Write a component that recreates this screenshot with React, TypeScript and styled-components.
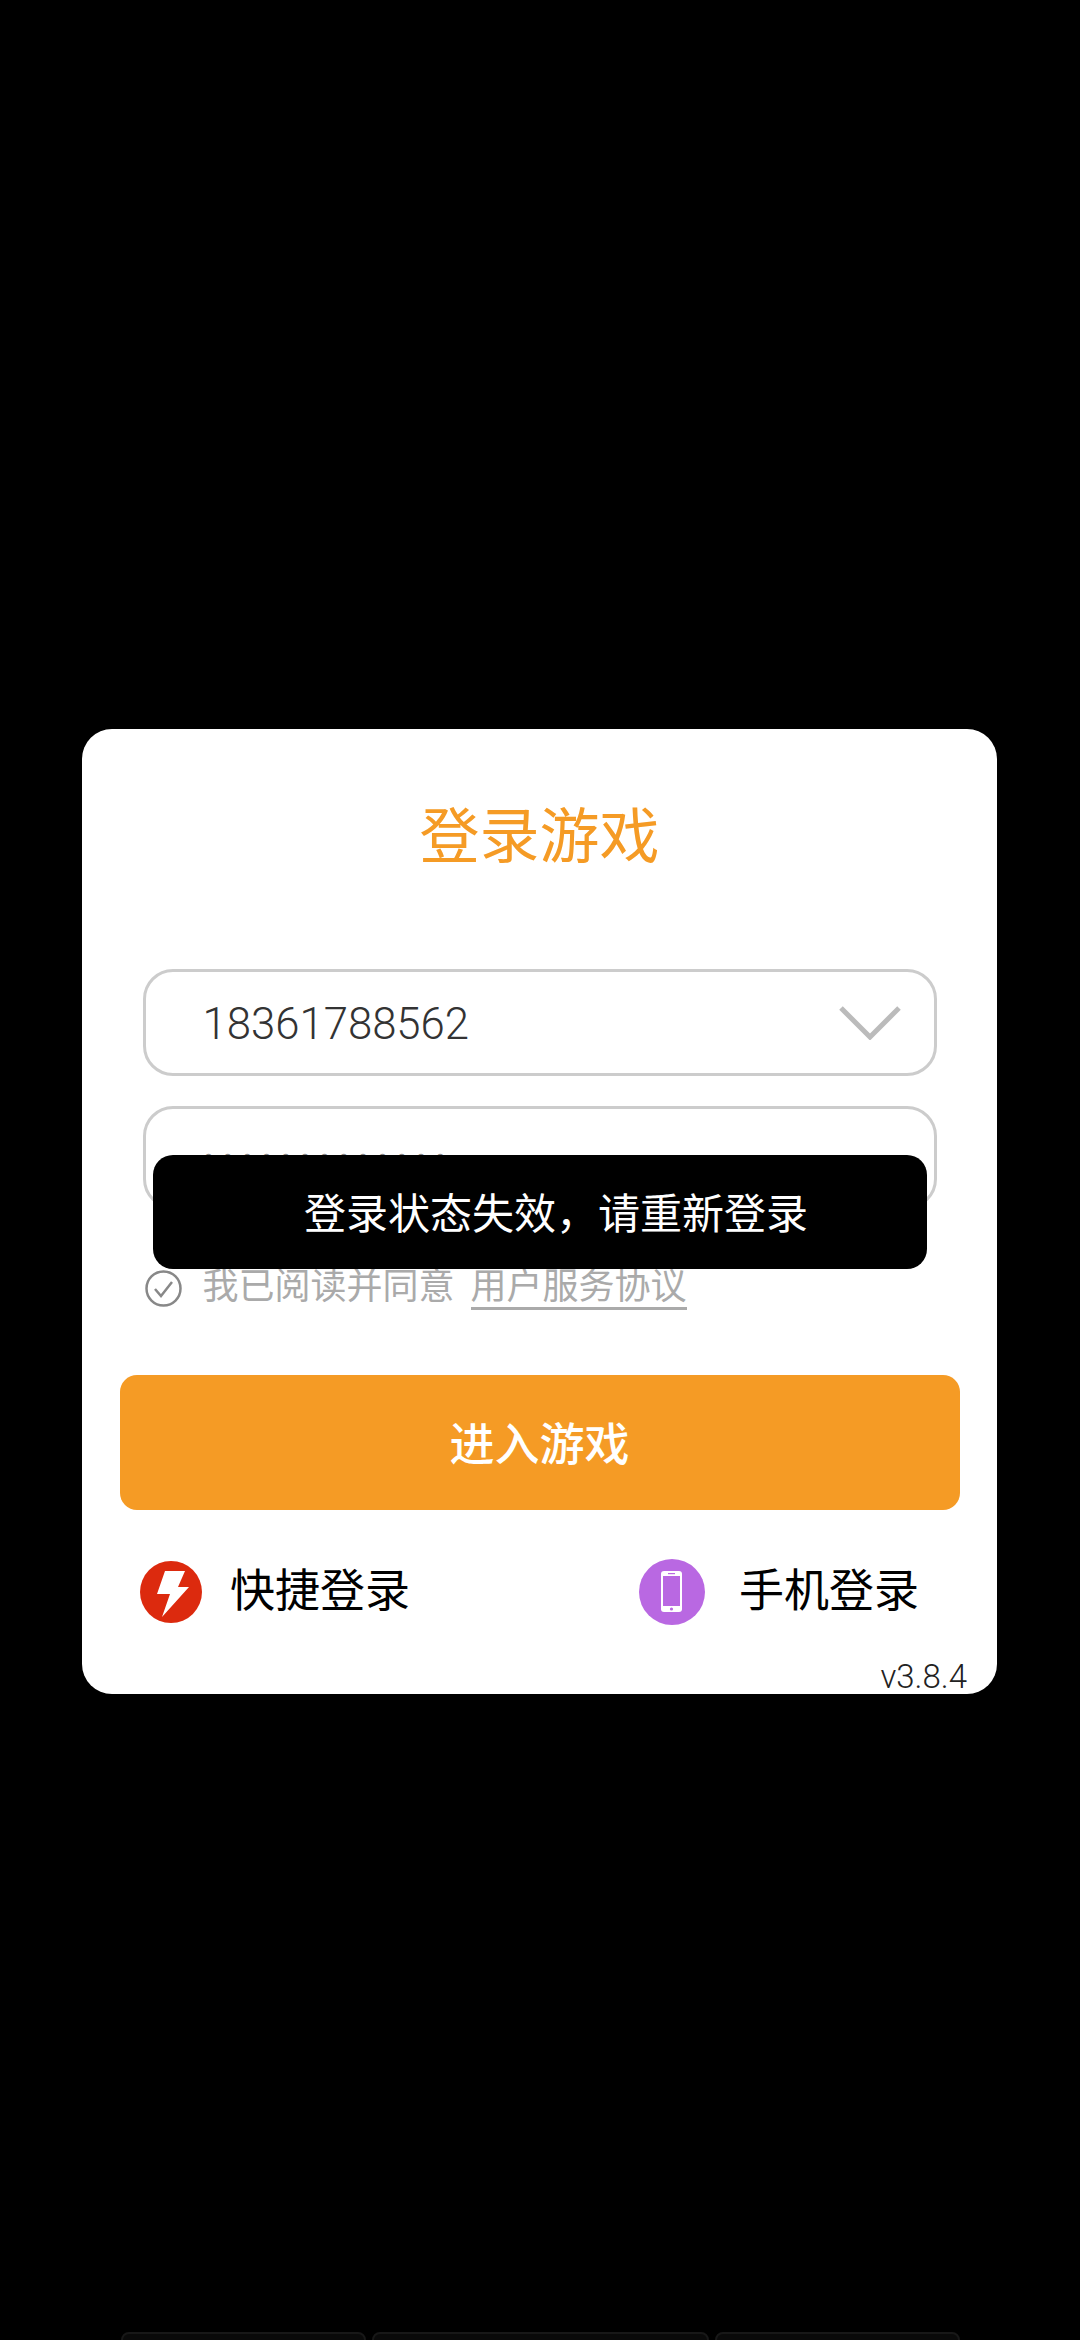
import React from "react";
import styled, { createGlobalStyle } from "styled-components";

const ORANGE = "#f59b25";
const CJK = `Roboto, "Noto Sans CJK SC", sans-serif`;

const GlobalStyle = createGlobalStyle`
  html, body {
    margin: 0;
    padding: 0;
    background: #000;
  }
  * {
    box-sizing: border-box;
  }
`;

const Screen = styled.div`
  width: 1080px;
  height: 2340px;
  overflow: hidden;
  background: #000;
  padding-top: 729px;
  display: flex;
  flex-direction: column;
  align-items: center;
  font-family: ${CJK};
`;

const Card = styled.div`
  position: relative;
  flex-shrink: 0;
  width: 915px;
  height: 965px;
  margin-left: -1px;
  background: #fff;
  border-radius: 30px;
  display: flex;
  flex-direction: column;
  align-items: center;
`;

const Title = styled.h1`
  margin: 73px 0 0;
  height: 72px;
  line-height: 72px;
  font-size: 60px;
  font-weight: 400;
  color: ${ORANGE};
`;

const Fields = styled.div`
  width: 794px;
  margin-top: 95px;
  display: flex;
  flex-direction: column;
  gap: 30px;
`;

const Field = styled.div<{ $height: number }>`
  height: ${(p) => p.$height}px;
  border: 3px solid #ccc;
  border-radius: 30px;
  padding: 0 33px 0 58px;
  display: flex;
  align-items: center;
  justify-content: space-between;
`;

const Account = styled.span`
  font-size: 43.7px;
  font-weight: 300;
  color: #333;
  margin-left: -1px;
  padding-top: 2px;
`;

const Dots = styled.span`
  font-size: 30px;
  letter-spacing: 9.2px;
  color: #888;
`;

const Agreement = styled.div`
  width: 794px;
  margin-top: 58px;
  padding-left: 2px;
  display: flex;
  align-items: center;
  gap: 21px;
  font-size: 36px;
  line-height: 40px;
  color: #aaa;
`;

const AgreementText = styled.span`
  display: flex;
  gap: 16px;
`;

const AgreementLink = styled.span`
  border-bottom: 3px solid #aaa;
`;

const EnterButton = styled.button`
  flex-shrink: 0;
  width: 840px;
  height: 135px;
  margin-top: 65px;
  padding: 0 0 3px;
  border: 0;
  border-radius: 17px;
  background: ${ORANGE};
  color: #fff;
  font-family: ${CJK};
  font-size: 45px;
  font-weight: 500;
`;

const AltLogins = styled.div`
  width: 915px;
  margin-top: 49px;
  padding: 0 78px 0 58px;
  display: flex;
  justify-content: space-between;
  align-items: center;
`;

const AltLogin = styled.div<{ $gap: number }>`
  display: flex;
  align-items: center;
  gap: ${(p) => p.$gap}px;
  font-size: 45px;
  line-height: 60px;
  color: #000;
`;

const Version = styled.span`
  position: absolute;
  right: 30px;
  bottom: -1px;
  font-size: 33px;
  font-weight: 300;
  line-height: 36px;
  color: #222;
`;

const Toast = styled.div`
  position: absolute;
  left: 71px;
  top: 426px;
  width: 774px;
  height: 114px;
  padding: 0 0 4px 32px;
  border-radius: 20px;
  background: #000;
  color: #fff;
  font-size: 42px;
  display: flex;
  align-items: center;
  justify-content: center;
`;

const BottomTabs = styled.div`
  flex-shrink: 0;
  margin-top: 638px;
  display: flex;
  gap: 6px;
`;

const BottomTab = styled.div<{ $width: number }>`
  width: ${(p) => p.$width}px;
  height: 40px;
  background: #0a0a0a;
  border: 2px solid #181818;
  border-radius: 8px;
`;

const Chevron = () => (
  <svg width="62" height="34" viewBox="0 0 62 34" fill="none">
    <path d="M2 2 L31 31 L60 2" stroke="#bbb" strokeWidth="5" />
  </svg>
);

const CheckCircle = () => (
  <svg width="37" height="37" viewBox="0 0 37 37" fill="none">
    <circle cx="18.5" cy="18.5" r="17" stroke="#888" strokeWidth="2.5" />
    <path d="M10 19 L16 26 L27 12" stroke="#888" strokeWidth="2.5" />
  </svg>
);

const BoltIcon = () => (
  <svg width="62" height="62" viewBox="0 0 62 62">
    <circle cx="31" cy="31" r="31" fill="#dc2a0e" />
    <path d="M25 10 H45 L38 26 H49 L22 56 L30 33 H17 Z" fill="#fff" />
  </svg>
);

const PhoneIcon = () => (
  <svg width="66" height="66" viewBox="0 0 66 66">
    <circle cx="33" cy="33" r="33" fill="#b968e2" />
    <rect x="22" y="12" width="21" height="41" rx="3" fill="#fff" />
    <rect x="24" y="17" width="17" height="30" fill="#b968e2" />
    <circle cx="32.5" cy="50" r="1.6" fill="#b968e2" />
    <rect x="29" y="14" width="7" height="1.2" fill="#b968e2" />
  </svg>
);

export default function App() {
  return (
    <>
      <GlobalStyle />
      <Screen>
        <Card>
          <Title>登录游戏</Title>
          <Fields>
            <Field $height={107}>
              <Account>18361788562</Account>
              <Chevron />
            </Field>
            <Field $height={103}>
              <Dots>•••••••••••••</Dots>
            </Field>
          </Fields>
          <Agreement>
            <CheckCircle />
            <AgreementText>
              <span>我已阅读并同意</span>
              <AgreementLink>用户服务协议</AgreementLink>
            </AgreementText>
          </Agreement>
          <EnterButton>进入游戏</EnterButton>
          <AltLogins>
            <AltLogin $gap={28}>
              <BoltIcon />
              快捷登录
            </AltLogin>
            <AltLogin $gap={34}>
              <PhoneIcon />
              手机登录
            </AltLogin>
          </AltLogins>
          <Version>v3.8.4</Version>
          <Toast>{"登录状态失效\uFF0C请重新登录"}</Toast>
        </Card>
        <BottomTabs>
          <BottomTab $width={245} />
          <BottomTab $width={337} />
          <BottomTab $width={245} />
        </BottomTabs>
      </Screen>
    </>
  );
}
